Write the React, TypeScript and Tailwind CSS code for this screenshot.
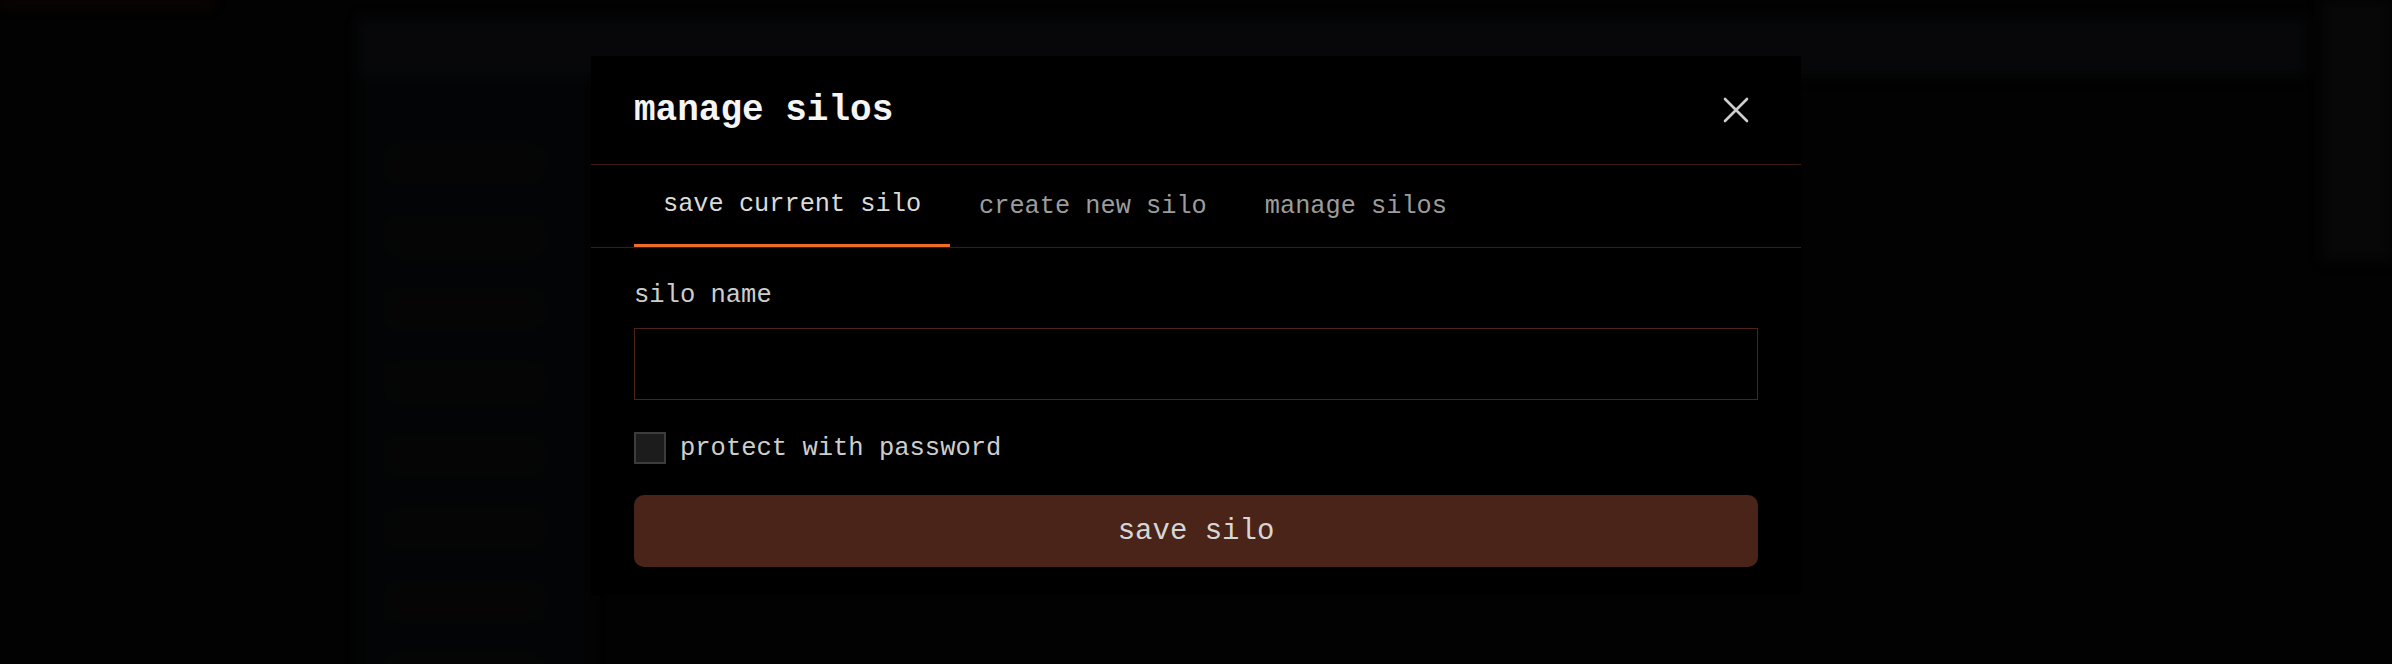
import React from "react";

const mono = { fontFamily: '"Liberation Mono", "DejaVu Sans Mono", monospace' };

function Background() {
  const rows = [0, 1, 2, 3, 4, 5, 6, 7];
  return (
    <div className="absolute inset-0 blur-[6px]">
      <div className="flex h-full">
        <div className="w-[358px] shrink-0">
          <div className="h-[5px] w-[213px] bg-[#1f0e05]" />
        </div>
        <div className="flex flex-1 flex-col pt-[18px]">
          <div className="h-[58px] shrink-0 rounded-md bg-[#0b0c0f]" />
          <div className="flex w-[234px] flex-1 flex-col gap-[38px] bg-[#060708] pl-[30px] pt-[70px]">
            {rows.map((r) => (
              <div key={r} className="h-[35px] w-[153px] shrink-0 rounded-md bg-[#090909]" />
            ))}
          </div>
        </div>
        <div className="ml-[16px] h-[260px] w-[70px] shrink-0 bg-[#0b0b0b]" />
      </div>
    </div>
  );
}

export default function App() {
  return (
    <div className="relative h-[664px] w-full overflow-hidden bg-[#040404]" style={mono}>
      <Background />
      <div className="absolute inset-0 flex justify-center bg-[rgba(0,0,0,0.35)] pt-[56px]">
        <div className="flex h-[539px] w-[1210px] flex-col bg-black">
          <div className="flex h-[109px] shrink-0 items-center justify-between border-b border-[#3b1d13] px-[43px]">
            <h2 className="text-[36px] font-bold leading-[41px] text-[#f5f5f5]">manage silos</h2>
            <svg width="26" height="26" viewBox="0 0 26 26" className="mr-[9px]" fill="none">
              <path d="M2 2 L24 24 M24 2 L2 24" stroke="#cfcfcf" strokeWidth="2.6" strokeLinecap="round" />
            </svg>
          </div>
          <div className="flex h-[83px] shrink-0 border-b border-[#3b1d13] px-[43px]">
            <div className="flex h-[82px] items-center border-b-[3px] border-[#ee6c2a] px-[29px] text-[25.3px] leading-[29px] text-[#dadada]">
              save current silo
            </div>
            <div className="flex h-[82px] items-center px-[29px] text-[25.3px] leading-[29px] text-[#9c9c9c]">
              create new silo
            </div>
            <div className="flex h-[82px] items-center px-[29px] text-[25.3px] leading-[29px] text-[#9c9c9c]">
              manage silos
            </div>
          </div>
          <div className="flex flex-col px-[43px] pt-[33px]">
            <label className="text-[25.5px] leading-[29px] text-[#cdcdcd]">silo name</label>
            <div className="mt-[18px] h-[72px] w-full shrink-0 border border-[#4d2417] bg-black" />
            <div className="mt-[32px] flex h-[32px] items-center gap-[14px]">
              <div className="h-[32px] w-[32px] shrink-0 border-2 border-[#3c3c3c] bg-[#1c1c1c]" />
              <span className="text-[25.5px] leading-[29px] text-[#cdcdcd]">protect with password</span>
            </div>
            <button className="mt-[31px] flex h-[72px] w-full shrink-0 items-center justify-center rounded-[10px] bg-[#4a2418] text-[29px] leading-[33px] text-[#d6d6d6]">
              save silo
            </button>
          </div>
        </div>
      </div>
    </div>
  );
}
